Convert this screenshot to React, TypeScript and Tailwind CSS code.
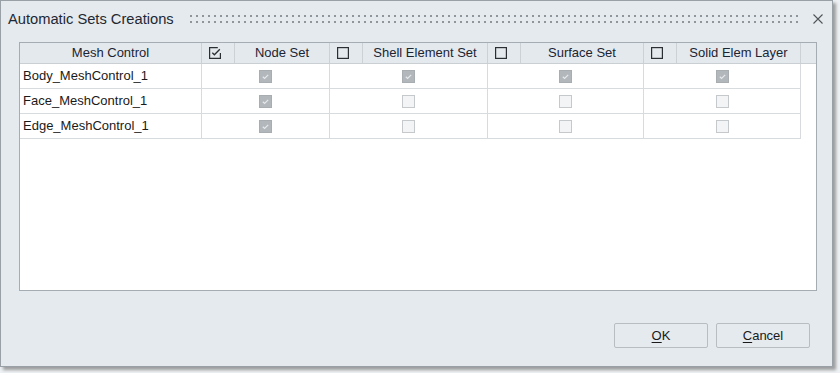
import { useState } from "react";

type Row = { name: string; node: boolean; shell: boolean; surface: boolean; solid: boolean };

const ROWS: Row[] = [
  { name: "Body_MeshControl_1", node: true, shell: true, surface: true, solid: true },
  { name: "Face_MeshControl_1", node: true, shell: false, surface: false, solid: false },
  { name: "Edge_MeshControl_1", node: true, shell: false, surface: false, solid: false },
];

// Disabled cell checkbox (greyed)
function CellCheck({ checked }: { checked: boolean }) {
  return checked ? (
    <svg width="13" height="13" viewBox="0 0 13 13">
      <rect x="0.5" y="0.5" width="12" height="12" fill="#b2b7bc" stroke="#a8adb2" />
      <path d="M3.8 6.8 L5.6 8.4 L9.2 4.8" fill="none" stroke="#e6e9eb" strokeWidth="1.2" />
    </svg>
  ) : (
    <svg width="13" height="13" viewBox="0 0 13 13">
      <rect x="0.5" y="0.5" width="12" height="12" fill="#f3f4f5" stroke="#c6c9cc" />
    </svg>
  );
}

// Header "select all" checkbox
function HeadCheck({ checked }: { checked: boolean }) {
  return checked ? (
    <svg width="12" height="12" viewBox="0 0 12 12">
      <path d="M8.8 0.6 H0.6 V11.4 H11.4 V6" fill="none" stroke="#2b2f33" strokeWidth="1.2" />
      <path d="M3.3 5.8 L5.4 7.8 L10.8 2.2" fill="none" stroke="#2b2f33" strokeWidth="1.3" />
    </svg>
  ) : (
    <svg width="12" height="12" viewBox="0 0 12 12">
      <rect x="0.6" y="0.6" width="10.8" height="10.8" fill="none" stroke="#2b2f33" strokeWidth="1.2" />
    </svg>
  );
}

export default function App() {
  const [rows] = useState(ROWS);

  return (
    <div
      className="w-[840px] h-[373px] bg-[#eef1f3] overflow-hidden"
      style={{ fontFamily: '"Liberation Sans", Arial, sans-serif' }}
    >
      <div className="w-[833px] h-[367px] border border-[#9aa1a6] bg-[#e4eaed] shadow-[3px_3px_3px_rgba(0,0,0,0.35)] flex flex-col">
        {/* title bar */}
        <div className="h-[36px] flex items-center pl-[7px] pr-[8px]">
          <span className="text-[14.7px] text-[#1f2833] leading-none">Automatic Sets Creations</span>
          <svg className="ml-[16px] flex-1 h-[8px]" height="8">
            <defs>
              <pattern id="grip" width="6" height="6" patternUnits="userSpaceOnUse">
                <rect width="2" height="2" fill="#8f969b" />
              </pattern>
            </defs>
            <rect width="100%" height="8" fill="url(#grip)" />
          </svg>
          <button className="ml-[10px] w-[12px] h-[12px] flex items-center justify-center">
            <svg width="10" height="10" viewBox="0 0 10 10">
              <path d="M0.5 0.5 L9.5 9.5 M9.5 0.5 L0.5 9.5" stroke="#505459" strokeWidth="1.1" />
            </svg>
          </button>
        </div>

        {/* table */}
        <div className="mt-[5px] ml-[18px] w-[798px] h-[249px] border border-[#a6adb2] bg-white text-[13px]">
          <div className="h-[21px] bg-[#e3e9ed] border-b border-[#c9cfd3] grid grid-cols-[182px_33px_95px_33px_125px_33px_123px_33px_124px_15px] text-[#1b2433]">
            <div className="border-r border-[#cbd1d5] flex items-center justify-center">Mesh Control</div>
            <div className="border-r border-[#cbd1d5] flex items-center pl-[7px]"><HeadCheck checked /></div>
            <div className="border-r border-[#cbd1d5] flex items-center justify-center">Node Set</div>
            <div className="border-r border-[#cbd1d5] flex items-center pl-[7px]"><HeadCheck checked={false} /></div>
            <div className="border-r border-[#cbd1d5] flex items-center justify-center">Shell Element Set</div>
            <div className="border-r border-[#cbd1d5] flex items-center pl-[7px]"><HeadCheck checked={false} /></div>
            <div className="border-r border-[#cbd1d5] flex items-center justify-center">Surface Set</div>
            <div className="border-r border-[#cbd1d5] flex items-center pl-[7px]"><HeadCheck checked={false} /></div>
            <div className="border-r border-[#cbd1d5] flex items-center justify-center">Solid Elem Layer</div>
            <div />
          </div>
          {rows.map((r) => (
            <div key={r.name} className="w-[781px] h-[25px] border-b border-[#d8dbde] grid grid-cols-[182px_128px_158px_156px_157px] text-[#1a1a1a]">
              <div className="border-r border-[#d8dbde] flex items-center pl-[3px]">{r.name}</div>
              <div className="border-r border-[#d8dbde] flex items-center justify-center"><CellCheck checked={r.node} /></div>
              <div className="border-r border-[#d8dbde] flex items-center justify-center"><CellCheck checked={r.shell} /></div>
              <div className="border-r border-[#d8dbde] flex items-center justify-center"><CellCheck checked={r.surface} /></div>
              <div className="border-r border-[#d8dbde] flex items-center justify-center"><CellCheck checked={r.solid} /></div>
            </div>
          ))}
        </div>

        {/* buttons */}
        <div className="mt-[32px] flex justify-end gap-[8px] pr-[22px] text-[13px] text-[#1a1a1a]">
          <button className="w-[94px] h-[25px] border border-[#b7bdc1] rounded-[2px] bg-[#e4eaed]">
            <span className="underline underline-offset-2">O</span>K
          </button>
          <button className="w-[94px] h-[25px] border border-[#b7bdc1] rounded-[2px] bg-[#e4eaed]">
            <span className="underline underline-offset-2">C</span>ancel
          </button>
        </div>
      </div>
    </div>
  );
}
